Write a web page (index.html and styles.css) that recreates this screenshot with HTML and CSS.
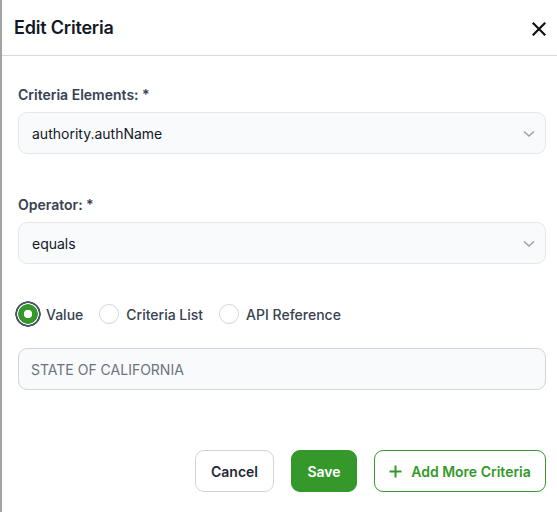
FILE: index.html
```html
<!DOCTYPE html>
<html>
<head>
<meta charset="utf-8">
<link rel="stylesheet" href="styles.css">
</head>
<body>
<div class="dialog">
  <div class="header">
    <h1 class="title">Edit Criteria</h1>
    <button class="close" aria-label="Close">
      <svg width="14" height="14" viewBox="0 0 14 14"><path d="M1.5 1.5L12.5 12.5M12.5 1.5L1.5 12.5" stroke="#111" stroke-width="2.2" stroke-linecap="square"/></svg>
    </button>
  </div>
  <div class="body">
    <div class="field">
      <label class="label">Criteria Elements: *</label>
      <div class="select">
        <span>authority.authName</span>
        <svg class="chev" width="12" height="8" viewBox="0 0 12 8"><path d="M1 1.5L6 6L11 1.5" fill="none" stroke="#9ca3af" stroke-width="1.6"/></svg>
      </div>
    </div>
    <div class="field op">
      <label class="label">Operator: *</label>
      <div class="select">
        <span>equals</span>
        <svg class="chev" width="12" height="8" viewBox="0 0 12 8"><path d="M1 1.5L6 6L11 1.5" fill="none" stroke="#9ca3af" stroke-width="1.6"/></svg>
      </div>
    </div>
    <div class="radios">
      <div class="radio-item"><span class="radio checked"></span><span class="rlabel">Value</span></div>
      <div class="radio-item"><span class="radio"></span><span class="rlabel">Criteria List</span></div>
      <div class="radio-item"><span class="radio"></span><span class="rlabel">API Reference</span></div>
    </div>
    <div class="input">STATE OF CALIFORNIA</div>
    <div class="actions">
      <button class="btn cancel">Cancel</button>
      <button class="btn save">Save</button>
      <button class="btn add"><svg width="13" height="13" viewBox="0 0 13 13"><path d="M6.5 0.5V12.5M0.5 6.5H12.5" stroke="#34992a" stroke-width="2"/></svg>Add More Criteria</button>
    </div>
  </div>
</div>
</body>
</html>
```
FILE: styles.css
```css
* { box-sizing: border-box; }
html, body { margin: 0; padding: 0; }
body {
  width: 557px;
  height: 512px;
  background: #fff;
  font-family: Inter, "Liberation Sans", sans-serif;
  color: #1f2937;
  overflow: hidden;
}
.dialog {
  height: 512px;
  border-left: 2px solid #a3a3a3;
  background: #fff;
}
.header {
  height: 56px;
  border-bottom: 1px solid #d9d9d9;
  display: flex;
  align-items: center;
  justify-content: space-between;
  padding: 0 11px 0 12px;
}
.title {
  margin: 0;
  font-size: 18px;
  font-weight: 600;
  color: #111827;
  letter-spacing: -0.2px;
}
.close {
  border: 0;
  background: none;
  padding: 0;
  width: 14px;
  height: 14px;
  display: flex;
  margin-top: 2px;
}
.body {
  padding: 29px 11px 0 16px;
}
.label {
  display: block;
  font-size: 14px;
  font-weight: 600;
  color: #374151;
  line-height: 20px;
  margin-bottom: 7px;
}
.select {
  height: 42px;
  border: 1px solid #e5e7eb;
  border-radius: 9px;
  background: #f9fafb;
  display: flex;
  align-items: center;
  justify-content: space-between;
  padding: 0 10px 0 13px;
  font-size: 14px;
  color: #111827;
}
.chev { margin-top: 1px; }
.op { margin-top: 41px; }
.radios {
  display: flex;
  align-items: center;
  margin-top: 37px;
  margin-left: -3px;
  height: 26px;
}
.radio-item {
  display: flex;
  align-items: center;
  margin-right: 16px;
}
.radio {
  width: 20px;
  height: 20px;
  border-radius: 50%;
  border: 1px solid #d1d5db;
  background: #fff;
  margin-right: 7px;
}
.radio.checked {
  width: 26px;
  height: 26px;
  border: 0;
  margin-right: 5px;
  background: radial-gradient(circle, #fff 0 4px, #34992a 4.5px 9.5px, #fff 10px 10.5px, #4b5563 11px 12.5px, transparent 13px);
}
.rlabel {
  font-size: 14px;
  font-weight: 500;
  color: #374151;
}
.input {
  margin-top: 21px;
  height: 42px;
  border: 1px solid #d1d5db;
  border-radius: 9px;
  background: #f9fafb;
  display: flex;
  align-items: center;
  padding: 0 12px;
  font-size: 14px;
  color: #6b7280;
}
.actions {
  display: flex;
  justify-content: flex-end;
  gap: 17px;
  margin-top: 60px;
}
.btn {
  height: 42px;
  border-radius: 9px;
  font-family: Inter, "Liberation Sans", sans-serif;
  font-size: 14px;
  font-weight: 600;
  display: flex;
  align-items: center;
  justify-content: center;
  cursor: pointer;
}
.cancel {
  width: 79px;
  background: #fff;
  border: 1px solid #d1d5db;
  color: #1f2937;
}
.save {
  width: 66px;
  background: #34992a;
  border: 1px solid #34992a;
  color: #fff;
}
.add {
  width: 172px;
  background: #fff;
  border: 1px solid #34992a;
  color: #34992a;
  gap: 9px;
}
```
